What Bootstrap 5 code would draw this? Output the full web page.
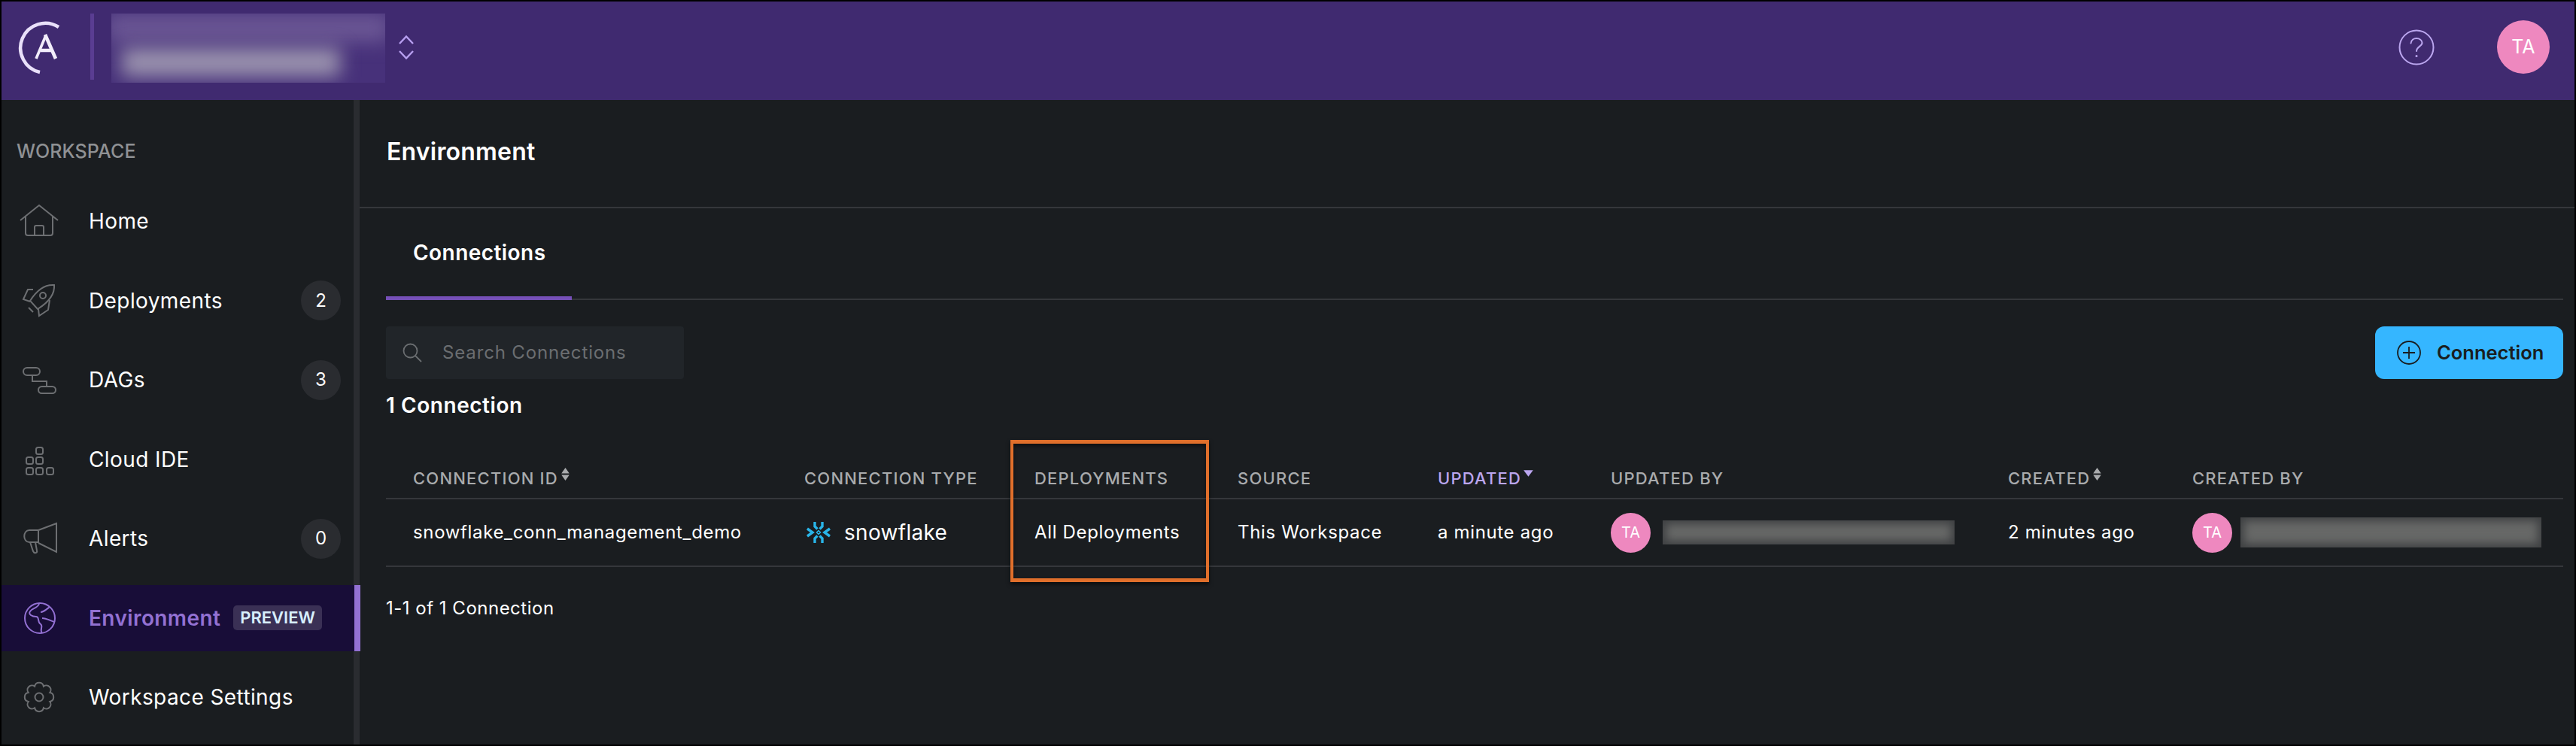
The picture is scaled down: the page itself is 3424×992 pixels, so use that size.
<!DOCTYPE html>
<html lang="en"><head><meta charset="utf-8"><title>Environment</title>
<link href="https://cdn.jsdelivr.net/npm/bootstrap@5.3.0/dist/css/bootstrap.min.css" rel="stylesheet">
<style>
html,body{height:100%;margin:0;background:#000;overflow:hidden}
body{font-family:Inter,"Liberation Sans",sans-serif;color:#fff}
.shell{width:3420px;height:988px;margin:2px;background:#1a1d20;overflow:hidden}
.topbar{height:131px;background:#402a70;flex:none}
.logo{width:60px;height:80px;margin-left:21px;flex:none}
.vsep{width:5px;height:88px;background:#5a3d92;margin-left:37px;flex:none;margin-top:-11px}
.blurbox{width:364px;height:92px;margin-left:23px;overflow:hidden;position:relative;flex:none;margin-top:-7px;background:#47317a}
.blur-a,.blur-b{position:absolute;filter:blur(12px)}
.blur-a{left:-6px;right:-6px;top:0;height:38px;background:#6a5694}
.blur-b{left:14px;width:290px;top:46px;height:38px;background:#9a92ae}
.chev{width:20px;height:32px;margin-left:18px;flex:none;margin-top:-10px}
.top-right{margin-top:-10px}
.help{width:48px;height:48px;flex:none}
.avatar-lg{width:70px;height:71px;border-radius:50%;background:#ee88bf;margin-left:83px;margin-right:33px;font-size:25px;flex:none}
.side{width:468px;flex:none;padding-top:53px}
.sbar{width:8px;background:#2a2c30;flex:none}
.side-title{font-size:25px;font-weight:500;color:#8f9194;margin-left:20px;line-height:30px;letter-spacing:.1px;margin-bottom:34px}
.nav-row{height:88px;margin-bottom:17.5px;font-size:28px;letter-spacing:.4px;padding-left:116px;padding-right:17px;position:relative}
.nav-ico{position:absolute;left:20px;top:19px;width:60px;height:50px}
.nav-ico svg{width:60px;height:50px;display:block}
.nav-on{background:#180d38;color:#9371d3;font-weight:600;margin-right:-1px}
.nav-on::after{content:"";position:absolute;right:-8px;top:0;bottom:0;width:8px;background:#9371d3}
.count{width:53px;height:53px;border-radius:50%;background:#2a2c30;font-size:24px;color:#fff;letter-spacing:0}
.tag-prev{background:#3a3055;color:#d8effd;font-size:22px;font-weight:600;border-radius:5px;padding:0 9px;height:33px;line-height:33px;margin-left:17px;letter-spacing:0}
.main{min-width:0;position:relative}
.page-head{height:144px;padding:49px 0 0 36px;font-size:32px;letter-spacing:.2px;font-weight:600;line-height:40px;border-bottom:2px solid #35373b}
.tabs-row{height:122px;margin-left:35px;margin-right:15px;border-bottom:2px solid #35373b;position:relative}
.tab-on{width:247px;height:122px;border-bottom:5px solid #7650b8;padding-left:36px;font-size:28px;letter-spacing:.45px;font-weight:600;padding-top:41px;line-height:36px}
.tools{margin:35px 15px 0 35px;height:70px}
.search-box{width:396px;height:70px;background:#212529;border-radius:4px;padding-left:22px;color:#6b6e71;font-size:24px;letter-spacing:.85px}
.search-box svg{width:26px;height:26px;margin-right:27px}
.add-btn{width:250px;height:70px;background:#35b6ff;border:0;border-radius:12px;color:#1a1d20;font-size:25.5px;font-weight:600;padding:0 0 0 29px}
.add-btn svg{width:32px;height:32px;margin-right:21px}
.total{margin:18px 0 0 35px;font-size:28px;letter-spacing:.55px;font-weight:600;line-height:34px}
.tbl-wrap{margin:41px 15px 0 35px;position:relative}
.conn-table{table-layout:fixed;width:2894px;margin:0;--bs-table-bg:transparent;--bs-table-color:#fff;--bs-table-border-color:#35373b;font-size:24px;letter-spacing:.65px;color:#fff}
.conn-table th{height:66px;padding:0 0 11px 36px;vertical-align:bottom;font-size:22px;font-weight:500;color:#a9abad;letter-spacing:1.2px;border-bottom:2px solid #35373b;white-space:nowrap;line-height:30px}
.conn-table td{height:90px;padding:0 0 0 36px;vertical-align:middle;border-bottom:2px solid #35373b;white-space:nowrap}
.w1{width:520px}.w2{width:306px}.w3{width:270px}.w4{width:266px}.w5{width:230px}.w6{width:528px}.w7{width:245px}.w8{width:529px}
.sort-mark{width:13px;height:19px;margin-left:3px;vertical-align:4px}
.th-on{color:#bba6ef!important}
.flake{width:32px;height:30px;margin-left:3px;margin-right:18px;flex:none}
.flake-name{font-size:28px;letter-spacing:.3px}
.avatar-sm{width:53px;height:53px;border-radius:50%;background:#ee88bf;font-size:20px;letter-spacing:0;flex:none}
.smear{height:32px;width:388px;margin-left:16px;overflow:hidden;position:relative;flex:none;background:#676867}
.smear-tall{height:40px;width:400px;margin-left:11px}
.smear::after{content:"";position:absolute;inset:0;box-shadow:inset 0 0 12px 5px #3f4143}
.pager{margin:39px 0 0 35px;font-size:24px;letter-spacing:.5px;line-height:32px}
.callout{position:absolute;left:830px;top:-12px;width:264px;height:189px;border-style:solid;border-color:#e06f2b;border-width:5px 4px;box-shadow:0 3px 5px rgba(0,0,0,.6),inset 0 3px 5px rgba(0,0,0,.5);pointer-events:none}
</style></head>
<body>
<div class="shell d-flex flex-column">
  <header class="topbar d-flex align-items-center">
    <svg class="logo" viewBox="0 0 60 80" fill="none"><path d="M55 8A33 33 0 1 0 30 68" stroke="#e9e0fa" stroke-width="4.500"/><path d="M38 19L25 50" stroke="#f2edfb" stroke-width="3.600"/><path d="M37 18L51 50M31 39H47" stroke="#f2edfb" stroke-width="4.600"/></svg>
    <span class="vsep"></span>
    <div class="blurbox" aria-hidden="true"><span class="blur-a"></span><span class="blur-b"></span></div>
    <svg class="chev" viewBox="0 0 20 32" fill="none" stroke="#b79ff0" stroke-width="2.400"><path d="M1 11L10 1.500L19 11M1 21L10 30.500L19 21"/></svg>
    <div class="ms-auto d-flex align-items-center top-right">
      <svg class="help" viewBox="0 0 48 48" fill="none" stroke="#bba6ef" stroke-width="2"><circle cx="24" cy="24" r="22.500"/><path d="M16.500 18.500C17 14 20.500 12 24 12C28 12 31.500 14.500 31.500 18C31.500 22.500 24 23 24 29" stroke-linecap="round"/><circle cx="24" cy="35.500" r="1.500" fill="#bba6ef" stroke="none"/></svg>
      <div class="avatar-lg d-flex align-items-center justify-content-center">TA</div>
    </div>
  </header>
  <div class="d-flex flex-grow-1" style="min-height:0">
    <nav class="side">
      <div class="side-title">WORKSPACE</div>
      <div class="nav-row d-flex align-items-center"><span class="nav-ico"><svg viewBox="0 0 60 50" fill="none" stroke="#6d6f72" stroke-width="2"><path d="M5 24L30 4L55 24M12 19V41Q12 44 15 44H45Q48 44 48 41V19M24 44V33Q24 31 26 31H34Q36 31 36 33V44"/></svg></span>Home</div>
      <div class="nav-row d-flex align-items-center"><span class="nav-ico"><svg viewBox="0 0 60 50" fill="none" stroke="#6d6f72" stroke-width="2"><path d="M50 4C38 3 28 9 18 25L28 36C44 26 51 16 50 4Z"/><circle cx="35" cy="18" r="4"/><path d="M22 10L15 10L9 23L18 26M29 36L30 45L42 37L44 24M16 34L22 40"/></svg></span>Deployments<span class="count ms-auto d-flex align-items-center justify-content-center">2</span></div>
      <div class="nav-row d-flex align-items-center"><span class="nav-ico"><svg viewBox="0 0 60 50" fill="none" stroke="#6d6f72" stroke-width="2"><rect x="9" y="9" width="22" height="10" rx="5"/><rect x="29" y="34" width="23" height="9" rx="4.500"/><path d="M21 19V27H40V34"/></svg></span>DAGs<span class="count ms-auto d-flex align-items-center justify-content-center">3</span></div>
      <div class="nav-row d-flex align-items-center"><span class="nav-ico"><svg viewBox="0 0 60 50" fill="none" stroke="#6d6f72" stroke-width="2"><rect x="26" y="9" width="9" height="9" rx="2.500"/><rect x="13" y="22" width="9" height="9" rx="2.500"/><rect x="26" y="22" width="9" height="9" rx="2.500"/><rect x="13" y="36" width="9" height="9" rx="2.500"/><rect x="26" y="36" width="9" height="9" rx="2.500"/><rect x="40" y="36" width="9" height="9" rx="2.500"/></svg></span>Cloud IDE</div>
      <div class="nav-row d-flex align-items-center"><span class="nav-ico"><svg viewBox="0 0 60 50" fill="none" stroke="#6d6f72" stroke-width="2"><path d="M29 14H17C8 14 8 30 17 30H29ZM29 14L53 5V43L29 31M18 30L22 42C24 46 28 44 27 41L25 30"/></svg></span>Alerts<span class="count ms-auto d-flex align-items-center justify-content-center">0</span></div>
      <div class="nav-row nav-on d-flex align-items-center"><span class="nav-ico"><svg viewBox="0 0 60 50" fill="none" stroke="#9371d3" stroke-width="2"><circle cx="31" cy="25" r="20"/><path d="M30 6C28 12 20 12 18 16C15 20 21 23 26 23C31 23 27 30 32 33C36 36 30 40 34 45M44 10C39 14 36 17 32 17M34 25C40 25 46 29 51 30"/></svg></span>Environment<span class="tag-prev">PREVIEW</span></div>
      <div class="nav-row d-flex align-items-center"><span class="nav-ico"><svg viewBox="0 0 60 50" fill="none" stroke="#6d6f72" stroke-width="2"><circle cx="30" cy="25" r="5.500"/><path d="M35.900 10.700A6 6 0 0 1 44.300 19.100A6 6 0 0 1 44.300 30.900A6 6 0 0 1 35.900 39.300A6 6 0 0 1 24.100 39.300A6 6 0 0 1 15.700 30.900A6 6 0 0 1 15.700 19.100A6 6 0 0 1 24.100 10.700A6 6 0 0 1 35.900 10.700Z"/></svg></span>Workspace Settings</div>
    </nav>
    <div class="sbar"></div>
    <main class="main flex-grow-1">
      <div class="page-head">Environment</div>
      <div class="tabs-row"><div class="tab-on">Connections</div></div>
      <div class="tools d-flex justify-content-between">
        <div class="search-box d-flex align-items-center"><svg viewBox="0 0 26 26" fill="none" stroke="#6b6e71" stroke-width="1.800"><circle cx="10.500" cy="10.500" r="9"/><path d="M17 17L25 25"/></svg>Search Connections</div>
        <button class="add-btn d-flex align-items-center" type="button"><svg viewBox="0 0 32 32" fill="none" stroke="#1a1d20" stroke-width="1.800"><circle cx="16" cy="16" r="15"/><path d="M16 8V24M8 16H24"/></svg>Connection</button>
      </div>
      <div class="total">1 Connection</div>
      <div class="tbl-wrap">
        <table class="table conn-table">
          <colgroup><col class="w1"><col class="w2"><col class="w3"><col class="w4"><col class="w5"><col class="w6"><col class="w7"><col class="w8"></colgroup>
          <thead><tr>
            <th>CONNECTION ID<svg class="sort-mark" viewBox="0 0 12 18" fill="#a9abad"><path d="M6 1L11 8H1ZM6 17L1 10H11Z"/></svg></th>
            <th>CONNECTION TYPE</th><th>DEPLOYMENTS</th><th>SOURCE</th>
            <th class="th-on">UPDATED<svg class="sort-mark" viewBox="0 0 12 18" fill="#bba6ef"><path d="M0 4H12L6 12Z"/></svg></th>
            <th>UPDATED BY</th>
            <th>CREATED<svg class="sort-mark" viewBox="0 0 12 18" fill="#a9abad"><path d="M6 1L11 8H1ZM6 17L1 10H11Z"/></svg></th>
            <th>CREATED BY</th>
          </tr></thead>
          <tbody><tr>
            <td>snowflake_conn_management_demo</td>
            <td><div class="d-flex align-items-center"><svg class="flake" viewBox="0 0 32 30" fill="none" stroke="#29b5e8" stroke-width="3.400"><path d="M11 1V7L14.500 10.500M21 1V7L17.500 10.500M11 29V23L14.500 19.500M21 29V23L17.500 19.500M1 10L8 15L1 20M31 10L24 15L31 20"/><path d="M16 12.500L18.500 15L16 17.500L13.500 15Z" stroke-width="1.500"/></svg><span class="flake-name">snowflake</span></div></td>
            <td>All Deployments</td><td>This Workspace</td><td>a minute ago</td>
            <td><div class="d-flex align-items-center"><span class="avatar-sm d-flex align-items-center justify-content-center">TA</span><span class="smear"></span></div></td>
            <td>2 minutes ago</td>
            <td><div class="d-flex align-items-center"><span class="avatar-sm d-flex align-items-center justify-content-center">TA</span><span class="smear smear-tall"></span></div></td>
          </tr></tbody>
        </table>
        <div class="callout"></div>
      </div>
      <div class="pager">1-1 of 1 Connection</div>
    </main>
  </div>
</div>
<script src="https://cdn.jsdelivr.net/npm/bootstrap@5.3.0/dist/js/bootstrap.bundle.min.js"></script>
</body></html>
